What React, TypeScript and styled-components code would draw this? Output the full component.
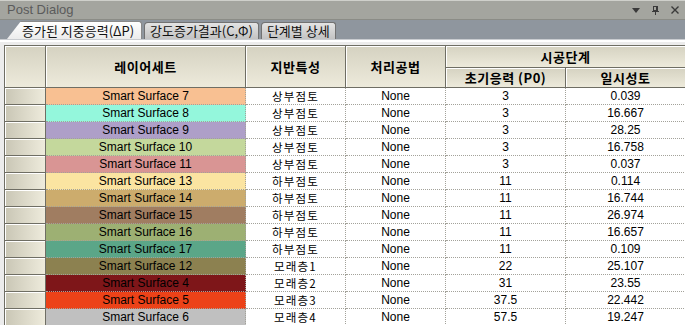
import * as React from 'react'
import styled, {createGlobalStyle} from 'styled-components'

const GlobalStyle = createGlobalStyle`
  html, body {
    margin: 0;
    padding: 0;
    background: #f2f2f2;
    overflow: hidden;
  }
  * {
    box-sizing: border-box;
  }
`

const latin = `"Liberation Sans", "Noto Sans CJK KR", sans-serif`
const korean = `"Noto Sans CJK KR", "Liberation Sans", sans-serif`

const Panel = styled.div`
  width: 685px;
  height: 325px;
  display: flex;
  flex-direction: column;
  overflow: hidden;
  background: #f2f2f2;
`

const TitleBar = styled.div`
  height: 20px;
  flex: none;
  display: flex;
  align-items: center;
  padding: 0 6px 0 7px;
  background: #a4a59f;
  border-top: 1px solid #cfd0cb;
  border-bottom: 1px solid #8b8c86;
  .title {
    flex: 1;
    font-family: ${latin};
    font-size: 13px;
    color: #5b5b5b;
    line-height: 18px;
  }
  .buttons {
    display: flex;
    align-items: center;
    gap: 12px;
  }
`

const TabStrip = styled.div`
  height: 20px;
  flex: none;
  display: flex;
  align-items: flex-end;
  gap: 2px;
  padding-left: 7px;
  background: #8f969e;
  border-bottom: 1px solid #c9ccd0;
`

const Tab = styled.div<{$active?: boolean}>`
  height: ${(p) => (p.$active ? 18 : 17)}px;
  display: flex;
  align-items: center;
  font-family: ${korean};
  font-size: 13px;
  line-height: 16px;
  color: #111;
  white-space: nowrap;
  ${(p) =>
    p.$active
      ? `
    padding: 0 6px 0 15px;
    width: 135px;
    background: linear-gradient(#ffffff, #ececec);
    border-top: 1px solid #8a8a8a;
    border-right: 1px solid #8a8a8a;
    border-top-right-radius: 3px;
    clip-path: polygon(14px 0, 100% 0, 100% 100%, 0 100%);
  `
      : `
    padding: 0 5px 0 5px;
    background: linear-gradient(#e3e3e3, #c3c3c3);
    border: 1px solid #727272;
    border-bottom: none;
    border-top-left-radius: 4px;
    border-top-right-radius: 3px;
  `}
`

const Content = styled.div`
  flex: 1;
  padding: 3px 0 0 4px;
  border-top: 2px solid #ffffff;
  background: #ececec;
  overflow: hidden;
`

const Grid = styled.div`
  display: grid;
  grid-template-columns: 41px 200px 100px 100px 120px 120px;
  grid-template-rows: 22px 20px repeat(14, 17px);
  width: 682px;
  border-left: 1px solid #6f6e64;
  border-top: 1px solid #6f6e64;
  background: #fff;
`

const HeadCell = styled.div<{$rows?: number; $cols?: number}>`
  grid-row: span ${(p) => p.$rows ?? 1};
  grid-column: span ${(p) => p.$cols ?? 1};
  display: flex;
  align-items: center;
  justify-content: center;
  background: linear-gradient(#d5d2c1, #edeadb);
  border-right: 1px solid #6f6e64;
  border-bottom: 1px solid #6f6e64;
  box-shadow: inset 1px 1px 0 #ffffff;
  font-family: ${korean};
  font-weight: bold;
  font-size: 13px;
  letter-spacing: 0.5px;
  line-height: 16px;
  color: #000;
`

const RowHead = styled.div`
  background: linear-gradient(90deg, #c9c6b5, #eeebdc);
  border-right: 1px solid #6f6e64;
  border-bottom: 1px solid #6f6e64;
  box-shadow: inset 1px 1px 0 #ffffff;
`

const Cell = styled.div<{$bg?: string; $latin?: boolean}>`
  display: flex;
  align-items: center;
  justify-content: center;
  background: ${(p) => p.$bg ?? '#ffffff'};
  border-right: 1px dotted #a3a29a;
  border-bottom: 1px dotted #a3a29a;
  font-family: ${(p) => (p.$latin ? latin : korean)};
  font-size: ${(p) => (p.$latin ? '12px' : '11.5px')};
  letter-spacing: ${(p) => (p.$latin ? '0' : '1.2px')};
  line-height: 16px;
  color: #000;
  white-space: nowrap;
`

type TRow = {
  name: string
  color: string
  soil: string
  p0: string
  fill: string
}

const rows: TRow[] = [
  {name: 'Smart Surface 7', color: '#f8c092', soil: '상부점토', p0: '3', fill: '0.039'},
  {name: 'Smart Surface 8', color: '#94f7dc', soil: '상부점토', p0: '3', fill: '16.667'},
  {name: 'Smart Surface 9', color: '#ae9fc8', soil: '상부점토', p0: '3', fill: '28.25'},
  {name: 'Smart Surface 10', color: '#c4d89c', soil: '상부점토', p0: '3', fill: '16.758'},
  {name: 'Smart Surface 11', color: '#d99594', soil: '상부점토', p0: '3', fill: '0.037'},
  {name: 'Smart Surface 13', color: '#fbe4a1', soil: '하부점토', p0: '11', fill: '0.114'},
  {name: 'Smart Surface 14', color: '#ccac6d', soil: '하부점토', p0: '11', fill: '16.744'},
  {name: 'Smart Surface 15', color: '#a07d61', soil: '하부점토', p0: '11', fill: '26.974'},
  {name: 'Smart Surface 16', color: '#9db073', soil: '하부점토', p0: '11', fill: '16.657'},
  {name: 'Smart Surface 17', color: '#5ba688', soil: '하부점토', p0: '11', fill: '0.109'},
  {name: 'Smart Surface 12', color: '#8c8150', soil: '모래층1', p0: '22', fill: '25.107'},
  {name: 'Smart Surface 4', color: '#7e1619', soil: '모래층2', p0: '31', fill: '23.55'},
  {name: 'Smart Surface 5', color: '#ec4218', soil: '모래층3', p0: '37.5', fill: '22.442'},
  {name: 'Smart Surface 6', color: '#c0c0c0', soil: '모래층4', p0: '57.5', fill: '19.247'},
]

const DropIcon = () => (
  <svg width="8" height="5" viewBox="0 0 8 5">
    <path d="M0 0h8L4 5z" fill="#3a3a3a" />
  </svg>
)

const PinIcon = () => (
  <svg width="7" height="9" viewBox="0 0 7 9" shapeRendering="crispEdges">
    <path d="M1.5 0.5h4v4h-4z" fill="none" stroke="#3a3a3a" />
    <path d="M4 1v3.5" stroke="#3a3a3a" />
    <path d="M0 5h7v1H0zM3 6h1v3H3z" fill="#3a3a3a" />
  </svg>
)

const CloseIcon = () => (
  <svg width="8" height="8" viewBox="0 0 8 8">
    <path d="M0.5 0.5l7 7M7.5 0.5l-7 7" stroke="#3a3a3a" strokeWidth="1.4" />
  </svg>
)

const App: React.FC = () => {
  return (
    <Panel>
      <GlobalStyle />
      <TitleBar>
        <span className="title">Post Dialog</span>
        <div className="buttons">
          <DropIcon />
          <PinIcon />
          <CloseIcon />
        </div>
      </TitleBar>
      <TabStrip>
        <Tab $active>증가된 지중응력(ΔP)</Tab>
        <Tab>강도증가결과(C,Φ)</Tab>
        <Tab>단계별 상세</Tab>
      </TabStrip>
      <Content>
        <Grid>
          <HeadCell $rows={2} />
          <HeadCell $rows={2}>레이어세트</HeadCell>
          <HeadCell $rows={2}>지반특성</HeadCell>
          <HeadCell $rows={2}>처리공법</HeadCell>
          <HeadCell $cols={2}>시공단계</HeadCell>
          <HeadCell>초기응력 (P0)</HeadCell>
          <HeadCell>일시성토</HeadCell>

          {rows.map((row) => (
            <React.Fragment key={row.name}>
              <RowHead />
              <Cell $bg={row.color} $latin>{row.name}</Cell>
              <Cell>{row.soil}</Cell>
              <Cell $latin>None</Cell>
              <Cell $latin>{row.p0}</Cell>
              <Cell $latin>{row.fill}</Cell>
            </React.Fragment>
          ))}
        </Grid>
      </Content>
    </Panel>
  )
}

export default App
